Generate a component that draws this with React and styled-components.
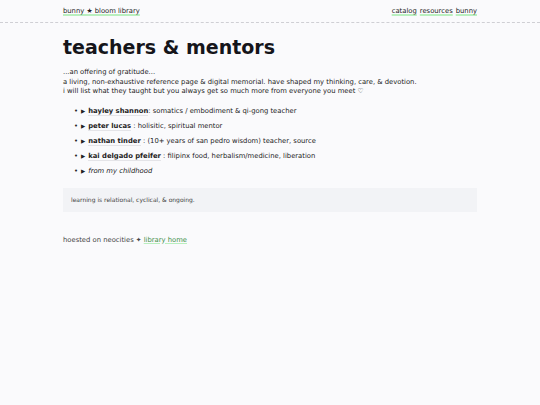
import React from "react";
import styled, { createGlobalStyle } from "styled-components";

const GlobalStyle = createGlobalStyle`
	html, body {
		margin: 0;
		padding: 0;
		background: #fafafc;
		color: #222;
		font-family: "DejaVu Sans", Verdana, sans-serif;
	}
`;

const StyledNav = styled.nav`
	border-bottom: 1px dashed #cfcfd4;
`;

const StyledNavInner = styled.div`
	max-width: 414px;
	margin: 0 auto;
	height: 22px;
	display: flex;
	align-items: center;
	justify-content: space-between;
	font-size: 6.8px;
`;

const StyledNavGroup = styled.div`
	display: flex;
	gap: 3px;
`;

const StyledLink = styled.a`
	color: ${(p) => (p.$green ? "#3f8f4a" : "#222")};
	text-decoration: underline;
	text-decoration-color: #b9efbe;
	text-decoration-thickness: 2px;
	text-underline-offset: 1px;
`;

const StyledMain = styled.main`
	max-width: 414px;
	margin: 0 auto;
	padding-top: 12px;
`;

const StyledTitle = styled.h1`
	margin: 0 0 9px;
	font-size: 19px;
	line-height: 24px;
	font-weight: bold;
	color: #15151a;
`;

const StyledIntro = styled.p`
	margin: 0;
	font-size: 6.8px;
	line-height: 9.6px;
`;

const StyledList = styled.ul`
	margin: 7px 0 0;
	padding-left: 11px;
	font-size: 6.8px;
	line-height: 15px;
	list-style: none;
`;

const StyledItem = styled.li`
	font-style: ${(p) => (p.$italic ? "italic" : "normal")};

	&::before {
		content: "•";
		font-style: normal;
		display: inline-block;
		width: 7px;
	}
`;

const StyledArrow = styled.span`
	font-style: normal;
	font-size: 5.5px;
	line-height: 1;
	margin-right: 3px;
`;

const StyledName = styled.b`
	border-bottom: 1px solid #e4e4e8;
`;

const StyledNote = styled.div`
	margin-top: 9px;
	background: #f2f3f6;
	padding: 8px 8px;
	font-size: 6px;
	line-height: 8px;
	color: #444;
`;

const StyledFooter = styled.footer`
	margin-top: 24px;
	font-size: 6.8px;
	color: #444;
`;

const teachers = [
	{ name: "hayley shannon", sep: ": ", desc: "somatics / embodiment & qi-gong teacher" },
	{ name: "peter lucas", sep: " : ", desc: "holisitic, spiritual mentor" },
	{ name: "nathan tinder", sep: " : ", desc: "(10+ years of san pedro wisdom) teacher, source" },
	{ name: "kai delgado pfeifer", sep: " : ", desc: "filipinx food, herbalism/medicine, liberation" },
];

export default function App() {
	return (
		<>
			<GlobalStyle />
			<StyledNav>
				<StyledNavInner>
					<StyledLink href="#">bunny ★ bloom library</StyledLink>
					<StyledNavGroup>
						<StyledLink href="#">catalog</StyledLink>
						<StyledLink href="#">resources</StyledLink>
						<StyledLink href="#">bunny</StyledLink>
					</StyledNavGroup>
				</StyledNavInner>
			</StyledNav>
			<StyledMain>
				<StyledTitle>teachers &amp; mentors</StyledTitle>
				<StyledIntro>
					...an offering of gratitude...
					<br />
					a living, non-exhaustive reference page &amp; digital memorial. have shaped my thinking, care, &amp; devotion.
					<br />
					i will list what they taught but you always get so much more from everyone you meet ♡
				</StyledIntro>
				<StyledList>
					{teachers.map((t) => (
						<StyledItem key={t.name}>
							<StyledArrow>▶</StyledArrow>
							<StyledName>{t.name}</StyledName>
							{t.sep}
							{t.desc}
						</StyledItem>
					))}
					<StyledItem $italic>
						<StyledArrow>▶</StyledArrow>
						from my childhood
					</StyledItem>
				</StyledList>
				<StyledNote>learning is relational, cyclical, &amp; ongoing.</StyledNote>
				<StyledFooter>
					hoested on neocities ✦ <StyledLink href="#" $green>library home</StyledLink>
				</StyledFooter>
			</StyledMain>
		</>
	);
}
